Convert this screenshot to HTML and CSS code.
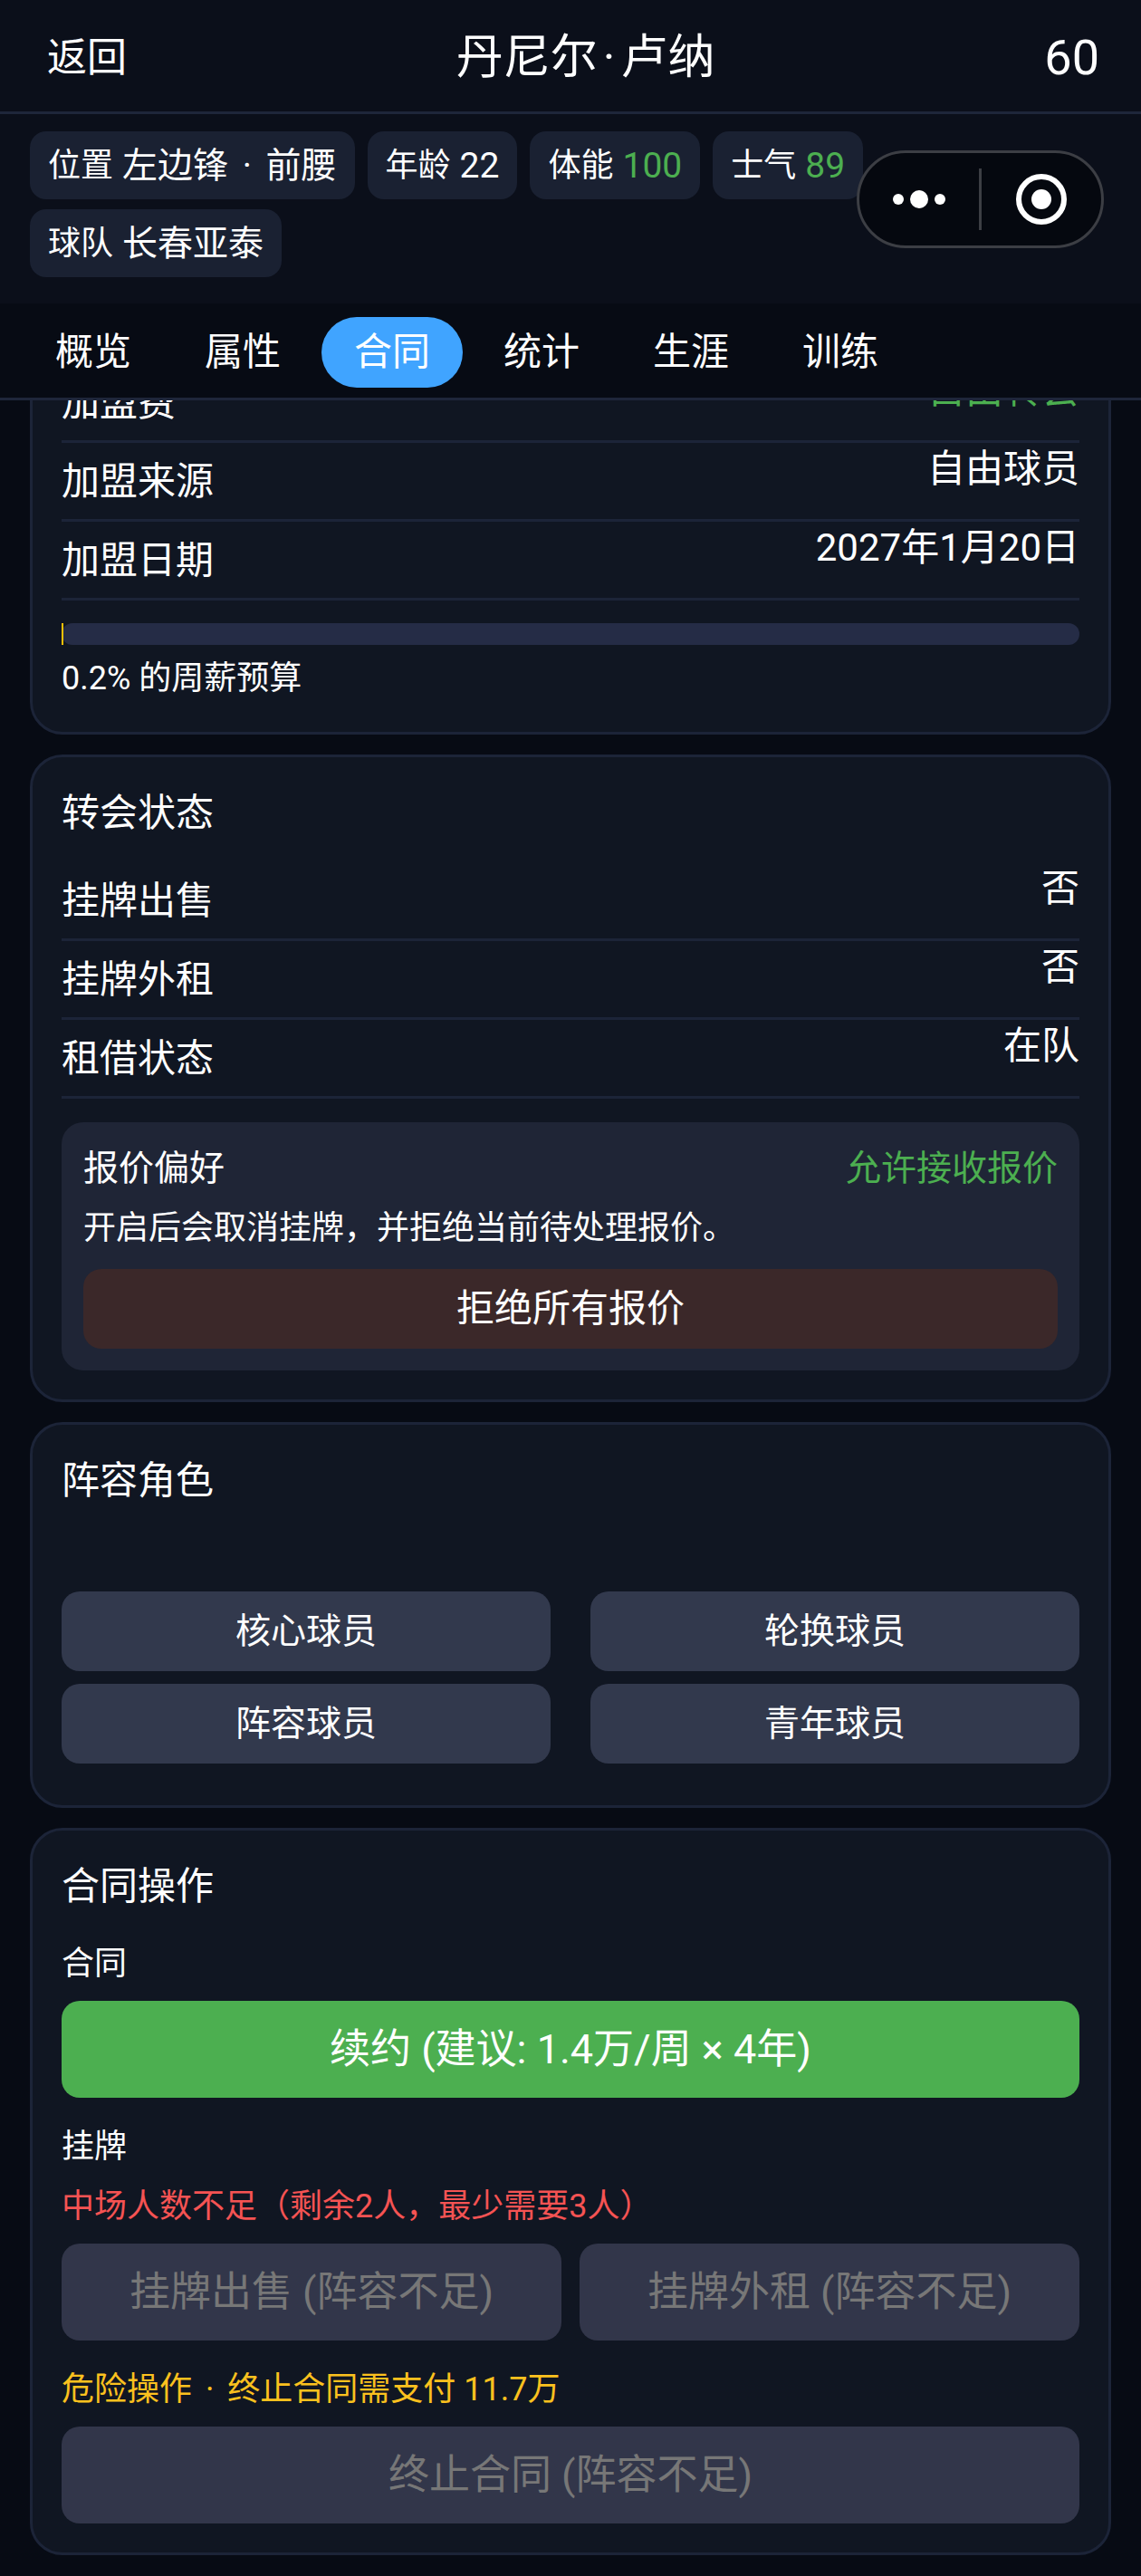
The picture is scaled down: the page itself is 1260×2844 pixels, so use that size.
FILE: index.html
```html
<!DOCTYPE html>
<html lang="zh-CN">

<head>
    <meta charset="UTF-8">
    <meta name="viewport" content="width=device-width, initial-scale=1.0">
    <title>丹尼尔·卢纳</title>
    <link rel="stylesheet" href="styles.css">
</head>

<body>

    <header class="header">
        <button class="back">返回</button>
        <h1 class="name">丹尼尔<span class="dot">·</span>卢纳</h1>
        <span class="rating">60</span>
    </header>

    <div class="chips">
        <span class="chip">位置 <b>左边锋 <span class="dot">·</span> 前腰</b></span>
        <span class="chip">年龄 <b>22</b></span>
        <span class="chip">体能 <b class="good">100</b></span>
        <span class="chip">士气 <b class="good">89</b></span>
        <span class="chip">球队 <b>长春亚泰</b></span>
    </div>

    <!-- Mini program menu -->
    <div class="capsule">
        <button class="capsule-button" aria-label="更多">
            <svg width="60" height="60" viewBox="0 0 60 60" fill="#fff">
                <circle cx="7" cy="30" r="6" />
                <circle cx="30" cy="30" r="10" />
                <circle cx="53" cy="30" r="6" />
            </svg>
        </button>
        <span class="capsule-line"></span>
        <button class="capsule-button" aria-label="关闭">
            <svg width="60" height="60" viewBox="0 0 60 60">
                <circle cx="30" cy="30" r="25" fill="none" stroke="#fff" stroke-width="6" />
                <circle cx="30" cy="30" r="11" fill="#fff" />
            </svg>
        </button>
    </div>

    <nav class="tabs">
        <button class="tab">概览</button>
        <button class="tab">属性</button>
        <button class="tab active">合同</button>
        <button class="tab">统计</button>
        <button class="tab">生涯</button>
        <button class="tab">训练</button>
    </nav>

    <main class="content">
        <section class="card scrolled">
            <div class="row"><span>加盟费</span><span class="value good">自由转会</span></div>
            <div class="row"><span>加盟来源</span><span class="value">自由球员</span></div>
            <div class="row"><span>加盟日期</span><span class="value">2027年1月20日</span></div>
            <div class="progress">
                <div class="progress-fill" style="width: 0.2%"></div>
            </div>
            <p class="budget">0.2% 的周薪预算</p>
        </section>

        <section class="card">
            <h2 class="title">转会状态</h2>
            <div class="row"><span>挂牌出售</span><span class="value">否</span></div>
            <div class="row"><span>挂牌外租</span><span class="value">否</span></div>
            <div class="row"><span>租借状态</span><span class="value">在队</span></div>
            <div class="offers">
                <div class="offers-head">
                    <span>报价偏好</span>
                    <span class="good">允许接收报价</span>
                </div>
                <p class="offers-text">开启后会取消挂牌，并拒绝当前待处理报价。</p>
                <button class="button danger">拒绝所有报价</button>
            </div>
        </section>

        <section class="card">
            <h2 class="title">阵容角色</h2>
            <div class="roles">
                <button class="button role">核心球员</button>
                <button class="button role">轮换球员</button>
                <button class="button role">阵容球员</button>
                <button class="button role">青年球员</button>
            </div>
        </section>

        <section class="card">
            <h2 class="title">合同操作</h2>
            <div class="actions">
                <div class="action">
                    <p class="hint">合同</p>
                    <button class="button large renew">续约 (建议: 1.4万/周 × 4年)</button>
                </div>
                <div class="action">
                    <p class="hint">挂牌</p>
                    <p class="hint error">中场人数不足（剩余2人，最少需要3人）</p>
                    <div class="pair">
                        <button class="button large" disabled>挂牌出售 (阵容不足)</button>
                        <button class="button large" disabled>挂牌外租 (阵容不足)</button>
                    </div>
                </div>
                <div class="action">
                    <p class="hint warning">危险操作 <span class="dot">·</span> 终止合同需支付 11.7万</p>
                    <button class="button large" disabled>终止合同 (阵容不足)</button>
                </div>
            </div>
        </section>
    </main>

</body>

</html>
```
FILE: styles.css
```css
* {
    box-sizing: border-box;
}

body {
    margin: 0;
    position: relative;
    font-family: Roboto, "Noto Sans CJK SC", sans-serif;
    font-size: 42px;
    color: #fff;
    background-color: #070b14;
}

h1,
h2,
p {
    margin: 0;
    font-weight: normal;
}

b {
    font-weight: normal;
}

button {
    font-family: inherit;
    font-size: inherit;
    color: inherit;
    background: none;
    border: none;
    padding: 0;
    cursor: pointer;
}

.good {
    color: #4caf50;
}

.dot {
    margin: 0 6px;
}

.header {
    display: flex;
    justify-content: space-between;
    align-items: center;
    height: 126px;
    padding: 5px 46px 0 52px;
    background-color: #0b0f1a;
    border-bottom: 3px solid #1e263a;
}

.back {
    font-size: 44px;
    line-height: 72px;
}

.name {
    font-size: 52px;
    line-height: 72px;
}

.rating {
    font-size: 54px;
    line-height: 72px;
}

.chips {
    display: flex;
    flex-wrap: wrap;
    gap: 11px 14px;
    padding: 19px 290px 29px 33px;
    background-color: #0b0f1a;
}

.chip {
    display: flex;
    align-items: center;
    gap: 10px;
    height: 75px;
    padding: 0 20px;
    font-size: 36px;
    line-height: 54px;
    white-space: nowrap;
    border-radius: 18px;
    background-color: #1a2132;
}

.chip b {
    font-size: 39px;
}

.capsule {
    position: absolute;
    top: 166px;
    right: 41px;
    display: flex;
    align-items: center;
    width: 273px;
    height: 108px;
    border: 3px solid #3c3e44;
    border-radius: 54px;
    background-color: #05080f;
}

.capsule-button {
    flex: 1;
    display: flex;
    justify-content: center;
}

.capsule-line {
    width: 3px;
    height: 68px;
    background-color: #3c3e44;
}

.tabs {
    display: flex;
    gap: 9px;
    padding: 15px 25px 11px;
    border-bottom: 3px solid #1e263a;
}

.tab {
    padding: 0 36px;
    line-height: 78px;
    border-radius: 39px;
}

.tab.active {
    background-color: #40a4ff;
}

.content {
    display: flex;
    flex-direction: column;
    gap: 22px;
    padding: 0 33px 25px;
    overflow: hidden;
}

.card {
    padding: 32px;
    border: 3px solid #1c2438;
    border-radius: 36px;
    background-color: #101622;
}

/* The list is scrolled, so the first card starts under the tabs */
.card.scrolled {
    margin-top: -75px;
}

.title {
    margin-bottom: 24px;
    font-size: 42px;
    line-height: 60px;
}

.row {
    display: flex;
    justify-content: space-between;
    align-items: flex-start;
    padding-top: 2px;
    line-height: 82px;
    border-bottom: 3px solid #1c2438;
}

.value {
    line-height: 54px;
}

.progress {
    height: 24px;
    margin-top: 25px;
    border-radius: 12px;
    background-color: #252c46;
}

.progress-fill {
    height: 100%;
    background-color: #ffc107;
}

.budget {
    margin-top: 10px;
    font-size: 36px;
    line-height: 54px;
}

.offers {
    margin-top: 26px;
    padding: 24px;
    border-radius: 24px;
    background-color: #1f2536;
}

.offers-head {
    display: flex;
    justify-content: space-between;
    font-size: 39px;
    line-height: 54px;
}

.offers-text {
    margin: 14px 0 20px;
    font-size: 36px;
    line-height: 50px;
}

.button {
    display: block;
    width: 100%;
    line-height: 88px;
    border-radius: 20px;
    background-color: #32394d;
}

.button.danger {
    background-color: #3b2829;
}

.button.role {
    font-size: 39px;
}

.button.large {
    font-size: 45px;
    line-height: 107px;
}

.button.renew {
    background-color: #4caf50;
}

.button:disabled {
    color: #777;
    background-color: #32364a;
    cursor: default;
}

.roles {
    display: grid;
    grid-template-columns: 1fr 1fr;
    gap: 14px 44px;
    padding: 68px 0 14px;
}

.actions {
    display: flex;
    flex-direction: column;
    gap: 29px;
    padding-top: 6px;
}

.hint {
    margin-bottom: 16px;
    font-size: 36px;
    line-height: 50px;
}

.hint.error {
    color: #f55353;
}

.hint.warning {
    color: #fbc11e;
}

.pair {
    display: grid;
    grid-template-columns: 1fr 1fr;
    gap: 20px;
}
```
